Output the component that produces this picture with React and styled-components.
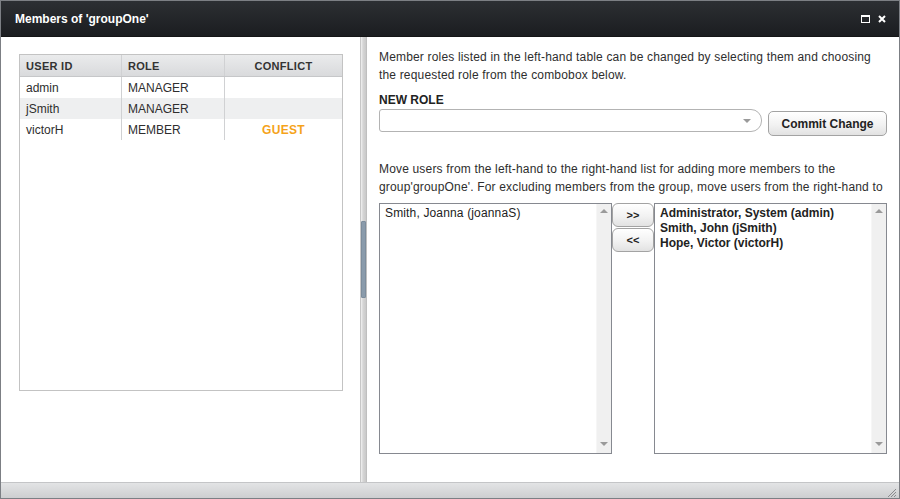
import React from "react";
import styled, { createGlobalStyle } from "styled-components";

const GlobalStyle = createGlobalStyle`
  html, body, #root {
    margin: 0;
    padding: 0;
    height: 100%;
  }
  body {
    font-family: "Liberation Sans", Arial, sans-serif;
    font-size: 12px;
    color: #2e2e2e;
    background: #ffffff;
  }
`;

const Window = styled.div`
  box-sizing: border-box;
  width: 900px;
  height: 499px;
  border: 1px solid #7c7f84;
  display: flex;
  flex-direction: column;
  background: #ffffff;
`;

const TitleBar = styled.div`
  height: 35px;
  flex: none;
  display: flex;
  align-items: center;
  justify-content: space-between;
  padding: 0 13px 0 14px;
  background: linear-gradient(#2c2f33, #1b1d20);
  border-bottom: 1px solid #141516;
  color: #ffffff;

  h1 {
    margin: 0;
    font-size: 12px;
    font-weight: bold;
  }
`;

const TitleTools = styled.div`
  display: flex;
  align-items: center;
  gap: 8px;

  svg {
    display: block;
  }
`;

const Body = styled.div`
  flex: 1;
  display: flex;
  min-height: 0;
`;

const LeftPane = styled.div`
  width: 359px;
  flex: none;
  box-sizing: border-box;
  padding: 17px 17px 0 18px;
`;

const Grid = styled.div`
  height: 337px;
  border: 1px solid #c3c3c3;
  box-sizing: border-box;
`;

const GridRow = styled.div`
  display: grid;
  grid-template-columns: 102px 103px 1fr;
  height: 21px;
  background: ${(p) =>
    p.$head
      ? "linear-gradient(#eaebec, #d9dadc)"
      : p.$alt
      ? "#eeeff0"
      : "#ffffff"};
  border-bottom: ${(p) => (p.$head ? "1px solid #c6c7c9" : "none")};
`;

const Cell = styled.div`
  display: flex;
  align-items: center;
  justify-content: ${(p) => (p.$center ? "center" : "flex-start")};
  padding-left: ${(p) => (p.$center ? "0" : "6px")};
  border-right: ${(p) => (p.$last ? "none" : "1px solid #d0d1d3")};
  font-size: ${(p) => (p.$head ? "11px" : "12px")};
  font-weight: ${(p) => (p.$head || p.$warn ? "bold" : "normal")};
  color: ${(p) => (p.$warn ? "#f5a31a" : p.$head ? "#333333" : "#2e2e2e")};
  letter-spacing: ${(p) => (p.$head || p.$warn ? "0.3px" : "0")};
`;

const Splitter = styled.div`
  width: 7px;
  flex: none;
  display: flex;
  flex-direction: column;
  padding-top: 184px;
  box-sizing: border-box;
  background: linear-gradient(90deg, #f2f2f2 0, #d6d6d6 2px, #c9c9c9 5px, #b5b5b5 6px);
  border-left: 1px solid #c7c7c7;
`;

const SplitThumb = styled.div`
  height: 75px;
  margin: 0 1px 0 0;
  background: #8a9bab;
  border: 1px solid #7d8d9c;
  border-radius: 1px;
`;

const RightPane = styled.div`
  flex: 1;
  padding: 11px 13px 0 12px;
  display: flex;
  flex-direction: column;
`;

const Note = styled.p`
  margin: 0;
  line-height: 18px;
  letter-spacing: 0.17px;
  color: #2e2e2e;
  margin-top: ${(p) => p.$top || 0}px;
`;

const FieldLabel = styled.div`
  margin-top: 7px;
  font-weight: bold;
  line-height: 18px;
  color: #222222;
`;

const RoleRow = styled.div`
  display: flex;
  align-items: flex-start;
  gap: 6px;
`;

const Combo = styled.div`
  width: 383px;
  height: 23px;
  box-sizing: border-box;
  border: 1px solid #b3b3b3;
  border-radius: 3px 11px 11px 3px;
  background: #ffffff;
  display: flex;
  align-items: center;
  justify-content: flex-end;
  padding-right: 10px;
`;

const DownTri = styled.span`
  width: 0;
  height: 0;
  border-left: 4px solid transparent;
  border-right: 4px solid transparent;
  border-top: 4px solid #9a9a9a;
`;

const UpTri = styled.span`
  width: 0;
  height: 0;
  border-left: 4px solid transparent;
  border-right: 4px solid transparent;
  border-bottom: 4px solid #9a9a9a;
`;

const Button = styled.button`
  font-family: "Liberation Sans", Arial, sans-serif;
  font-weight: bold;
  font-size: ${(p) => (p.$small ? "11px" : "12px")};
  color: #222222;
  width: ${(p) => p.$w}px;
  height: ${(p) => p.$h}px;
  margin-top: ${(p) => p.$mt || 0}px;
  padding: 0;
  border: 1px solid #a3a3a3;
  border-radius: ${(p) => (p.$small ? "6px" : "5px")};
  background: linear-gradient(#ffffff, #f2f2f2 55%, #e2e2e2);
  box-shadow: inset 0 1px 0 #ffffff;
  cursor: pointer;
`;

const Lists = styled.div`
  margin-top: 7px;
  display: flex;
  align-items: flex-start;
`;

const ListBox = styled.div`
  width: 233px;
  height: 251px;
  box-sizing: border-box;
  border: 1px solid #868990;
  display: flex;
  background: #ffffff;
`;

const ListItems = styled.div`
  flex: 1;
  padding: 2px 5px;
  display: flex;
  flex-direction: column;

  div {
    line-height: 15px;
    letter-spacing: ${(p) => (p.$bold ? "0" : "0.15px")};
    font-weight: ${(p) => (p.$bold ? "bold" : "normal")};
    color: #222222;
  }
`;

const ScrollTrack = styled.div`
  width: 15px;
  flex: none;
  background: #f0f0f0;
  border-left: 1px solid #f6f6f6;
  display: flex;
  flex-direction: column;
  justify-content: space-between;
  align-items: center;
  padding: 5px 0 7px;
  box-sizing: border-box;
`;

const Shuttle = styled.div`
  display: flex;
  flex-direction: column;
  gap: 1px;
`;

const Footer = styled.div`
  height: 15px;
  flex: none;
  background: linear-gradient(#e3e4e5, #cdced0);
  border-top: 1px solid #c4c5c7;
  display: flex;
  justify-content: flex-end;
  align-items: flex-end;
  padding-right: 2px;
`;

const Grip = () => (
  <svg width="11" height="11" viewBox="0 0 11 11">
    <path d="M10 2 L2 10 M10 5 L5 10 M10 8 L8 10" stroke="#8a8b8e" strokeWidth="1" />
  </svg>
);

const rows = [
  { id: "admin", role: "MANAGER", conflict: "" },
  { id: "jSmith", role: "MANAGER", conflict: "" },
  { id: "victorH", role: "MEMBER", conflict: "GUEST" },
];

const App = () => {
  return (
    <>
      <GlobalStyle />
      <Window>
        <TitleBar>
          <h1>Members of 'groupOne'</h1>
          <TitleTools>
            <svg width="9" height="8" viewBox="0 0 9 8">
              <rect x="0.5" y="0.5" width="8" height="7" fill="none" stroke="#ffffff" />
              <rect x="0.5" y="0.5" width="8" height="1.5" fill="#ffffff" />
            </svg>
            <svg width="8" height="8" viewBox="0 0 8 8">
              <path d="M1 1 L7 7 M7 1 L1 7" stroke="#ffffff" strokeWidth="2" />
            </svg>
          </TitleTools>
        </TitleBar>
        <Body>
          <LeftPane>
            <Grid>
              <GridRow $head>
                <Cell $head>USER ID</Cell>
                <Cell $head>ROLE</Cell>
                <Cell $head $center $last>CONFLICT</Cell>
              </GridRow>
              {rows.map((r, i) => (
                <GridRow key={r.id} $alt={i % 2 === 1}>
                  <Cell>{r.id}</Cell>
                  <Cell>{r.role}</Cell>
                  <Cell $center $last $warn={!!r.conflict}>
                    {r.conflict}
                  </Cell>
                </GridRow>
              ))}
            </Grid>
          </LeftPane>
          <Splitter>
            <SplitThumb />
          </Splitter>
          <RightPane>
            <Note>
              Member roles listed in the left-hand table can be changed by selecting them and choosing
              <br />
              the requested role from the combobox below.
            </Note>
            <FieldLabel>NEW ROLE</FieldLabel>
            <RoleRow>
              <Combo>
                <DownTri />
              </Combo>
              <Button $w={119} $h={25} $mt={2}>
                Commit Change
              </Button>
            </RoleRow>
            <Note $top={24}>
              Move users from the left-hand to the right-hand list for adding more members to the
              <br />
              group'groupOne'. For excluding members from the group, move users from the right-hand to
            </Note>
            <Lists>
              <ListBox>
                <ListItems>
                  <div>Smith, Joanna (joannaS)</div>
                </ListItems>
                <ScrollTrack>
                  <UpTri />
                  <DownTri />
                </ScrollTrack>
              </ListBox>
              <Shuttle>
                <Button $small $w={42} $h={24}>
                  &gt;&gt;
                </Button>
                <Button $small $w={42} $h={24}>
                  &lt;&lt;
                </Button>
              </Shuttle>
              <ListBox>
                <ListItems $bold>
                  <div>Administrator, System (admin)</div>
                  <div>Smith, John (jSmith)</div>
                  <div>Hope, Victor (victorH)</div>
                </ListItems>
                <ScrollTrack>
                  <UpTri />
                  <DownTri />
                </ScrollTrack>
              </ListBox>
            </Lists>
          </RightPane>
        </Body>
        <Footer>
          <Grip />
        </Footer>
      </Window>
    </>
  );
};

export default App;
